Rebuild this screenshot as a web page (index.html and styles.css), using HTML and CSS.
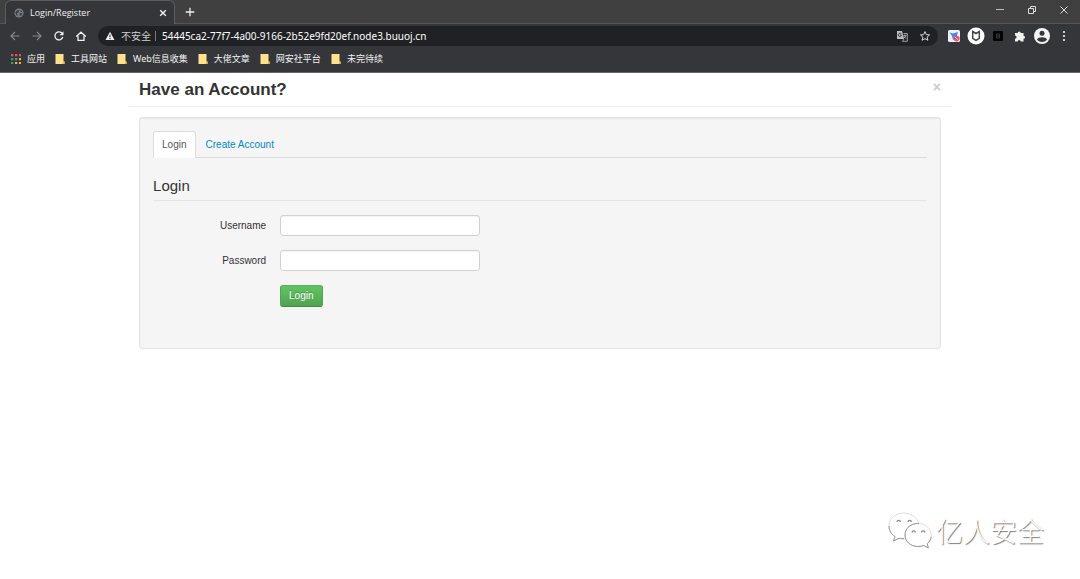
FILE: index.html
```html
<!DOCTYPE html>
<html lang="zh-CN">
	<head>
		<meta charset="UTF-8" />
		<meta name="viewport" content="width=device-width, initial-scale=1" />
		<title>Login/Register</title>
		<link rel="stylesheet" href="styles.css">
	</head>

	<body>
		<header class="browser">
			<div class="tabBar">
				<div class="tab">
					<svg class="icon10" viewBox="0 0 12 12"><circle cx="6" cy="6" r="5.5" fill="#777b80"/><path d="M1.500 5l3-2.500 2 .5-1 2-2 1 1 2-1 1.500zM7.500 6l2.500.5-1.500 3-2-1zM8 2.500l2 2-2 .5z" fill="#3a3b3f"/></svg>
					<span class="tabTitle">Login/Register</span>
					<button class="iconBtn" aria-label="关闭标签页"><svg class="icon8" viewBox="0 0 8 8"><path d="M1.2 1.2l5.6 5.6M6.8 1.2L1.2 6.8" stroke="#f1f1f1" stroke-width="1.4"/></svg></button>
				</div>
				<button class="iconBtn newTab" aria-label="新标签页"><svg class="icon10" viewBox="0 0 10 10"><path d="M5 .7v8.6M.7 5h8.6" stroke="#eee" stroke-width="1.3"/></svg></button>
				<div class="windowBtns">
					<button class="iconBtn" aria-label="最小化"><svg class="icon10" viewBox="0 0 10 10"><path d="M1 4.500h8" stroke="#bbb"/></svg></button>
					<button class="iconBtn" aria-label="还原"><svg class="icon10" viewBox="0 0 10 10" fill="none" stroke="#ddd"><path d="M1.5 3.5h5v5h-5zM3.5 3V1.5h5v5H7"/></svg></button>
					<button class="iconBtn" aria-label="关闭"><svg class="icon10" viewBox="0 0 10 10"><path d="M1.5 1.5l7 7M8.500 1.500l-7 7" stroke="#ddd"/></svg></button>
				</div>
			</div>
			<div class="toolBar">
				<div class="navBtns">
					<button class="iconBtn" aria-label="后退"><svg class="icon12" viewBox="0 0 12 12" fill="none" stroke="#85878b" stroke-width="1.2"><path d="M10.500 6H2M6 2L2 6l4 4"/></svg></button>
					<button class="iconBtn" aria-label="前进"><svg class="icon12" viewBox="0 0 12 12" fill="none" stroke="#85878b" stroke-width="1.2"><path d="M1.500 6H10M6 2l4 4-4 4"/></svg></button>
					<button class="iconBtn" aria-label="刷新"><svg class="icon12" viewBox="0 0 12 12"><path d="M9.300 3.700A4 4 0 1 0 9.800 7" fill="none" stroke="#f1f1f1" stroke-width="1.3"/><path d="M10.500 1.300v4H6.500z" fill="#f1f1f1"/></svg></button>
					<button class="iconBtn" aria-label="主页"><svg class="icon12" viewBox="0 0 12 12" fill="none" stroke="#f1f1f1" stroke-width="1.3"><path d="M1.200 6.500L6 2.200l4.800 4.300M3 5.800v4.500h6V5.800"/></svg></button>
				</div>
				<div class="addressBar">
					<svg class="icon10" viewBox="0 0 10 10"><path d="M5 .8L9.500 9H.5z" fill="#eee"/><path d="M5 3.800v2.500M5 7v1.200" stroke="#202124"/></svg>
					<span class="unsafe">不安全</span>
					<span class="divider"></span>
					<input type="text" class="url" aria-label="地址" value="54445ca2-77f7-4a00-9166-2b52e9fd20ef.node3.buuoj.cn" />
					<button class="iconBtn" aria-label="翻译"><svg class="icon12" viewBox="0 0 12 12"><path d="M1 1h5l2 8H1z" fill="#bdbfc1"/><path d="M5.300 3.800A1.700 1.700 0 1 0 5.300 6V5H3.900" fill="none" stroke="#333" stroke-width=".9"/><path d="M7.500 3.500h3.800v7.800H6.500L8 9M7.500 5.500h3M9 4.500v1M10 5.700L7.800 8.300M8 6.500l2 2" fill="none" stroke="#bdbfc1" stroke-width=".8"/></svg></button>
					<button class="iconBtn" aria-label="收藏"><svg class="icon12" viewBox="0 0 12 12"><path d="M6 1.600l1.300 3 3.300.3-2.500 2.200.8 3.200L6 8.600l-2.900 1.700.8-3.200-2.500-2.200 3.300-.3z" fill="none" stroke="#d5d7d9"/></svg></button>
				</div>
				<div class="extensions">
					<button class="iconBtn" aria-label="扩展程序一"><svg class="icon12" viewBox="0 0 12 12"><rect width="12" height="12" rx="1.500" fill="#edf0fa"/><path d="M1.500 2.500l3.500 1L10 2 8.300 8 5 10 4 6z" fill="#4d83ea"/><circle cx="8.700" cy="8.600" r="2.900" fill="#e65365"/><path d="M6.800 6.800l3.800 3.700" stroke="#ffc7ce"/></svg></button>
					<button class="iconBtn" aria-label="扩展程序二"><svg class="icon18" viewBox="0 0 18 18"><circle cx="9" cy="9" r="8.500" fill="#fff"/><path d="M5.700 4.500L9 6.500l3.300-2v6.800L9 13.400l-3.300-2.100z" fill="none" stroke="#444" stroke-width="1.500"/></svg></button>
					<button class="iconBtn" aria-label="扩展程序三"><svg class="icon10" viewBox="0 0 10 10"><rect width="10" height="10" rx="1" fill="#050505"/><path d="M3.500 3h3v4h-3zM3.500 5h3" fill="none" stroke="#383838"/></svg></button>
					<button class="iconBtn" aria-label="扩展程序"><svg class="icon12" viewBox="0 0 12 12"><path d="M1 3h2.700a1.500 1.500 0 1 1 3 0h2.800v2.800a1.500 1.500 0 1 1 0 3v2.700H6.800a1.600 1.600 0 0 0-3.200 0H1V8.700a1.600 1.600 0 0 0 0-3.200z" fill="#f1f1f1"/></svg></button>
					<button class="iconBtn" aria-label="用户"><svg class="icon18" viewBox="0 0 18 18"><circle cx="9" cy="9" r="8" fill="#f4f4f4"/><circle cx="9" cy="6.300" r="2.500" fill="#35363a"/><path d="M4 12.500c1-3 9-3 10 0-1.500 3.300-8.500 3.300-10 0z" fill="#35363a"/></svg></button>
					<button class="iconBtn" aria-label="菜单"><svg class="icon12" viewBox="0 0 12 12" fill="#f1f1f1"><circle cx="6" cy="2" r="1.100"/><circle cx="6" cy="6" r="1.100"/><circle cx="6" cy="10" r="1.100"/></svg></button>
				</div>
			</div>
			<nav class="bookmarks">
				<a href="#"><svg class="icon10" viewBox="0 0 10 10"><path d="M0 0h2.300v2.300H0zM4 0h2.300v2.300H4zM8 0h2v2.300H8z" fill="#ea5145"/><path d="M0 4h2.300v2.300H0z" fill="#36a35a"/><path d="M4 4h2.300v2.300H4z" fill="#4489ee"/><path d="M8 4h2v2.300H8zM4 8h2.300v2H4zM8 8h2v2H8z" fill="#f1b51e"/><path d="M0 8h2.300v2H0z" fill="#36a35a"/></svg>应用</a>
				<a href="#"><svg class="icon10" viewBox="0 0 10 10"><path d="M.5 0h8v7.500h1V10h-9z" fill="#ffe28b"/><path d="M8.500 7.500h1V10H7.500z" fill="#e5b949"/></svg>工具网站</a>
				<a href="#"><svg class="icon10" viewBox="0 0 10 10"><path d="M.5 0h8v7.500h1V10h-9z" fill="#ffe28b"/><path d="M8.500 7.500h1V10H7.500z" fill="#e5b949"/></svg>Web信息收集</a>
				<a href="#"><svg class="icon10" viewBox="0 0 10 10"><path d="M.5 0h8v7.500h1V10h-9z" fill="#ffe28b"/><path d="M8.500 7.500h1V10H7.500z" fill="#e5b949"/></svg>大佬文章</a>
				<a href="#"><svg class="icon10" viewBox="0 0 10 10"><path d="M.5 0h8v7.500h1V10h-9z" fill="#ffe28b"/><path d="M8.500 7.500h1V10H7.500z" fill="#e5b949"/></svg>网安社平台</a>
				<a href="#"><svg class="icon10" viewBox="0 0 10 10"><path d="M.5 0h8v7.500h1V10h-9z" fill="#ffe28b"/><path d="M8.500 7.500h1V10H7.500z" fill="#e5b949"/></svg>未完待续</a>
			</nav>
		</header>

		<main class="container">
			<div class="modalHeader">
				<h3>Have an Account?</h3>
				<button class="close" aria-label="Close">×</button>
			</div>
			<div class="modalBody">
				<div class="well">
					<nav class="navTabs">
						<a href="#login" class="active">Login</a>
						<a href="#create">Create Account</a>
					</nav>
					<form action="" method="post" id="login">
						<h4 class="legend">Login</h4>
						<div class="row">
							<label class="title" for="username">Username</label>
							<input type="text" id="username" name="username" />
						</div>
						<div class="row">
							<label class="title" for="password">Password</label>
							<input type="password" id="password" name="password" />
						</div>
						<div class="row">
							<span class="title"></span>
							<button class="Btn" type="submit">Login</button>
						</div>
					</form>
				</div>
			</div>
		</main>

		<div class="watermark">
			<svg class="wechat" viewBox="0 0 44 38">
				<g fill="#fff" stroke="#ddd">
					<path d="M15.500 1C7 1 1 6.700 1 14c0 4.400 2.300 8.200 6 10.700L5.500 29l5.500-2.700c8 2.400 20-1.500 20-12.300C31 6.700 24 1 15.500 1z"/>
					<path d="M30 11.500c-7.500 0-13 5-13 11.500s5.500 11.500 13 11.500c2 0 4-.3 5.700-1l4.600 2.500-1-4.300c2.500-2 4-5 4-8.700 0-6.500-5.800-11.500-13.300-11.500z"/>
				</g>
				<path d="M1 14c0 4.400 2.300 8.200 6 10.700L5.500 29l5.500-2.700 5 .5M31 11.500c-8.500-.5-14 5-14 11.500s5.500 11.500 13 11.500c2 0 4-.3 5.700-1l4.600 2.500-1-4.300c2-1.700 3.500-4 4-7" fill="none" stroke="#999"/>
				<path d="M9 10a1.700 1.700 0 0 1 3.400 0M20 10a1.700 1.700 0 0 1 3.400 0M24 20.500a1.700 1.700 0 0 1 3.400 0M33.500 20.500a1.700 1.700 0 0 1 3.400 0" fill="none" stroke="#888" stroke-width="1.200"/>
			</svg>
			<span>亿人安全</span>
		</div>
	</body>
</html>
```
FILE: styles.css
```css
*{
	box-sizing: border-box;
}
body{
	margin:0;
	min-height: 100vh;
	position: relative;
	background-color: white;
	color:#333;
	font-family: "Liberation Sans", Arial, "Noto Sans CJK SC", sans-serif;
	font-size: 10px;
	line-height: 14px;
}
svg{
	display: block;
	flex-shrink:0;
}
.icon8{
	width: 8px;
	height: 8px;
}
.icon10{
	width: 10px;
	height: 10px;
}
.icon12{
	width: 12px;
	height: 12px;
}
.icon18{
	width: 18px;
	height: 18px;
}
.iconBtn{
	padding:0;
	border:none;
	background: none;
}

/* browser */
.browser{
	background-color: #35363a;
	border-bottom:solid 1px #66676b;
	color:#f1f1f1;
	font-family: "Noto Sans", "Noto Sans CJK SC", sans-serif;
}
.tabBar{
	height: 24px;
	padding-left:5px;
	display: flex;
	align-items:stretch;
	background-color: #404040;
	border-bottom:solid 1px #545558;
}
.tab{
	width: 170px;
	height: 24px;
	padding:0 7px 0 8px;
	display: flex;
	align-items:center;
	gap:6px;
	background-color: #35363a;
	border:solid 1px #5c5d60;
	border-bottom:none;
	border-radius: 6px 6px 0 0;
}
.tabTitle{
	flex-grow:1;
	font-family: "Open Sans", sans-serif;
	font-size: 9px;
}
.newTab{
	margin-left:10px;
}
.windowBtns{
	margin-left:auto;
	padding:0 11px 3px 0;
	display: flex;
	align-items:center;
	gap:22px;
}
.toolBar{
	height: 24px;
	padding:0 5px 0 9px;
	display: flex;
	align-items:center;
	gap:9px;
}
.navBtns{
	display: flex;
	gap:10px;
}
.addressBar{
	flex-grow:1;
	height: 20px;
	margin-left:2px;
	padding:0 7px;
	display: flex;
	align-items:center;
	gap:6px;
	background-color: #202124;
	border-radius: 10px;
}
.addressBar .iconBtn + .iconBtn{
	margin-left:5px;
}
.unsafe{
	color:#d0d1d3;
}
.divider{
	width: 1px;
	height: 10px;
	margin-left:-2px;
	background-color: #77797d;
}
.url{
	flex-grow:1;
	min-width:0;
	padding:0;
	border:none;
	outline:none;
	background: none;
	color:white;
	font-family: inherit;
	font-size: 10px;
}
.extensions{
	margin-left:-4px;
	display: flex;
	align-items:center;
}
.extensions .iconBtn{
	width: 22px;
	display: flex;
	justify-content:center;
}
.bookmarks{
	height: 24px;
	padding:0 11px 2px;
	display: flex;
	align-items:center;
	gap:10px;
}
.bookmarks a{
	display: flex;
	align-items:center;
	gap:6px;
	color:#f1f1f1;
	font-size: 9px;
	text-decoration: none;
	white-space: nowrap;
}

/* login modal */
.container{
	width: 76.1%;
	margin:0 auto;
}
.modalHeader{
	height: 34px;
	padding:0 10px;
	display: flex;
	justify-content:space-between;
	align-items:center;
	border-bottom:solid 1px #eee;
}
.modalHeader h3{
	margin:0;
	font-size: 17px;
	line-height: 22px;
}
.close{
	padding:0 0 5px;
	border:none;
	background: none;
	color:#ccc;
	font-family: inherit;
	font-size: 14px;
	font-weight: bold;
	line-height: 14px;
}
.modalBody{
	padding:10px;
}
.well{
	padding:13px 13px 41px;
	background-color: #f5f5f5;
	border:solid 1px #e3e3e3;
	border-radius: 3px;
	box-shadow: inset 0 1px 1px rgba(0,0,0,.05);
}
.navTabs{
	height: 27px;
	margin-bottom:14px;
	display: flex;
	align-items:stretch;
	border-bottom:solid 1px #ddd;
}
.navTabs a{
	margin-bottom:-1px;
	padding:6px 9px;
	border:solid 1px transparent;
	border-bottom:none;
	border-radius: 3px 3px 0 0;
	color:#0088cc;
	text-decoration: none;
}
.navTabs .active{
	padding:6px 8px;
	background-color: white;
	border-color: #ddd;
	color:#555;
}
.legend{
	height: 29px;
	margin:0 0 14px;
	border-bottom:solid 1px #e5e5e5;
	font-size: 15px;
	font-weight: normal;
	line-height: 28px;
}
.row{
	margin-bottom:14px;
	display: flex;
	align-items:center;
	gap:14px;
}
.row:last-child{
	margin-bottom:0;
}
.title{
	width:113px;
	text-align: right;
}
.row input{
	width: 200px;
	height: 21px;
	padding:3px 4px;
	background-color: white;
	border:solid 1px #d2d2d2;
	border-radius: 3px;
	outline:none;
	font-size: 10px;
	box-shadow: inset 0 1px 1px rgba(0,0,0,.05);
}
.Btn{
	padding:3px 8px;
	border:solid 1px #4ea04e;
	border-color: #57b357 #51a351 #428742;
	border-radius: 3px;
	background-image: linear-gradient(#62c462, #51a351);
	color: white;
	font-family: inherit;
	font-size: 10px;
	line-height: 14px;
	text-shadow: 0 -1px 0 rgba(0,0,0,.25);
}

/* account mark over the page corner */
.watermark{
	position: absolute;
	right:36px;
	bottom:29px;
	display: flex;
	align-items:center;
	gap:4px;
	color:white;
	font-family: "Noto Sans CJK SC", sans-serif;
	font-size: 27px;
	font-weight: 300;
	line-height: 38px;
	text-shadow: 1px 1px 1px #777;
}
.wechat{
	width: 44px;
	height: 38px;
}
```
